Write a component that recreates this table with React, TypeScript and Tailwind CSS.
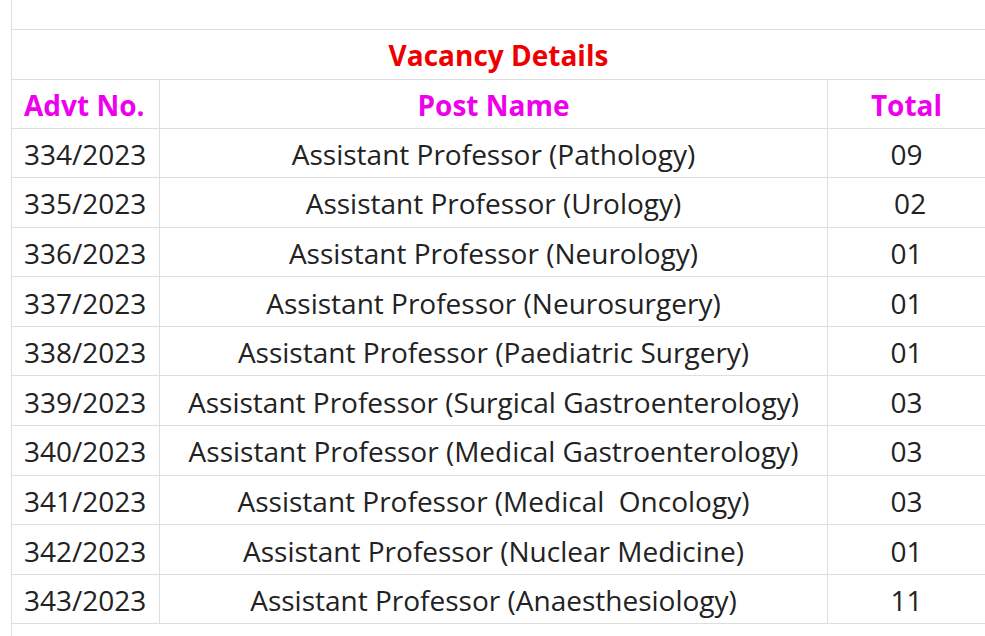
import React from "react";

const rows: [string, string, string][] = [
  ["334/2023", "Assistant Professor (Pathology)", "09"],
  ["335/2023", "Assistant Professor (Urology)", "\u00a002"],
  ["336/2023", "Assistant Professor (Neurology)", "01"],
  ["337/2023", "Assistant Professor (Neurosurgery)", "01"],
  ["338/2023", "Assistant Professor (Paediatric Surgery)", "01"],
  ["339/2023", "Assistant Professor (Surgical Gastroenterology)", "03"],
  ["340/2023", "Assistant Professor (Medical Gastroenterology)", "03"],
  ["341/2023", "Assistant Professor (Medical\u00a0 Oncology)", "03"],
  ["342/2023", "Assistant Professor (Nuclear Medicine)", "01"],
  ["343/2023", "Assistant Professor (Anaesthesiology)", "11"],
];

export default function App() {
  return (
    <div className="w-[985px] h-[636px] overflow-hidden bg-white pl-[11px]" style={{ fontFamily: '"Open Sans", sans-serif' }}>
      <table className="w-[974px] border-collapse text-[#222222] text-[28px]">
        <colgroup>
          <col className="w-[148px]" />
          <col className="w-[668px]" />
          <col />
        </colgroup>
        <tbody>
          <tr className="h-[29px]">
            <td colSpan={3} className="border-l border-b border-[#dedede]"></td>
          </tr>
          <tr className="h-[50px]">
            <td colSpan={3} className="border-l border-b border-[#dedede] text-center font-bold text-[#ee0000] leading-none pt-[2px]">
              Vacancy Details
            </td>
          </tr>
          <tr className="h-[49px]">
            <td className="border-l border-b border-r border-[#dedede] pl-[12px] font-bold text-[#ee00ee] leading-none pt-[2px]">Advt No.</td>
            <td className="border-b border-r border-[#dedede] text-center font-bold text-[#ee00ee] leading-none pt-[2px]">Post Name</td>
            <td className="border-b border-[#dedede] text-center font-bold text-[#ee00ee] leading-none pt-[2px]">Total</td>
          </tr>
          {rows.map((r) => (
            <tr key={r[0]} className="h-[49.6px]">
              <td className="border-l border-b border-r border-[#dedede] pl-[12px] leading-none pt-[2px]">{r[0]}</td>
              <td className="border-b border-r border-[#dedede] text-center leading-none pt-[2px]">{r[1]}</td>
              <td className="border-b border-[#dedede] text-center leading-none pt-[2px]">{r[2]}</td>
            </tr>
          ))}
          <tr className="h-[40px]">
            <td colSpan={3} className="border-l border-[#dedede]"></td>
          </tr>
        </tbody>
      </table>
    </div>
  );
}
